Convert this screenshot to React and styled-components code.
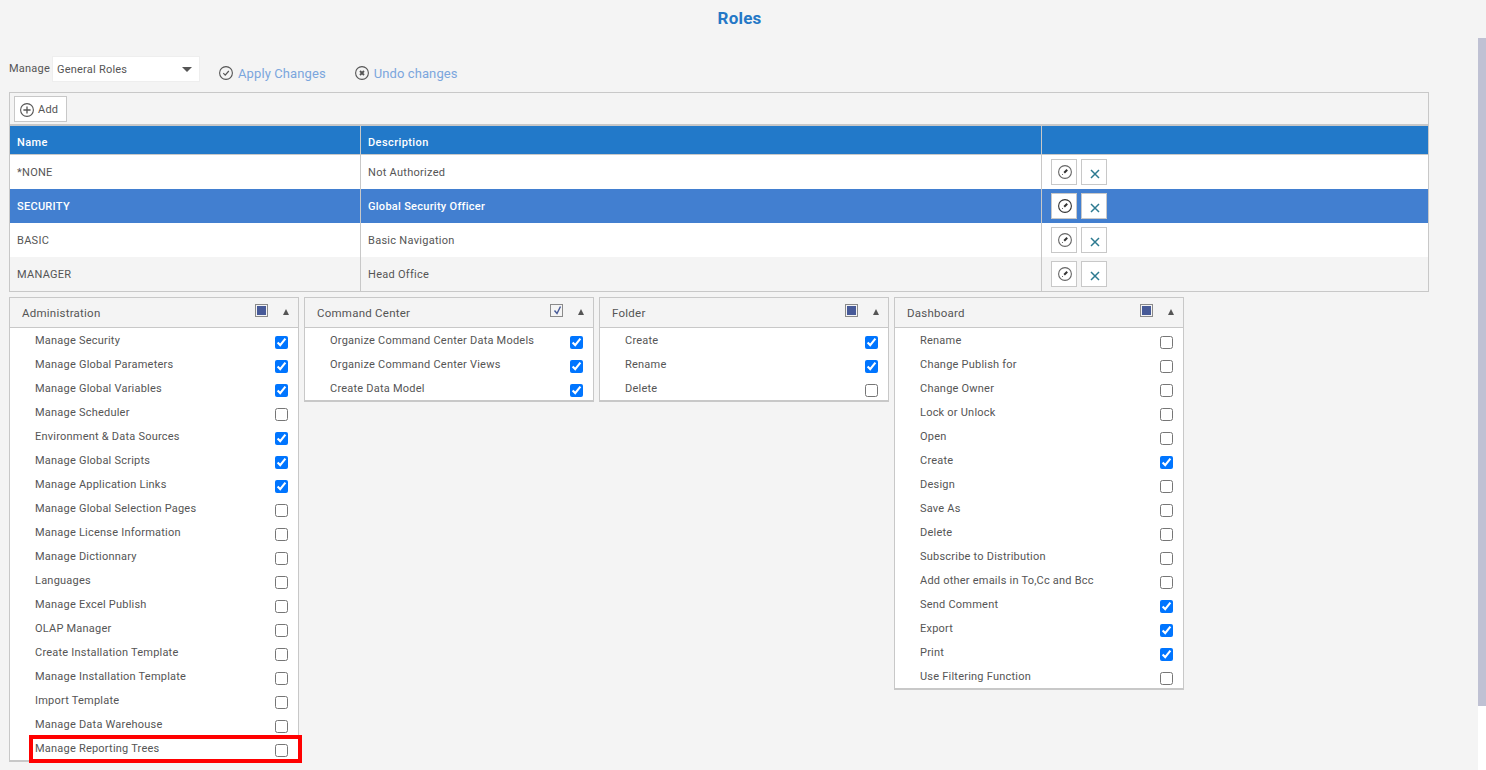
import React from 'react';
import styled, { createGlobalStyle } from 'styled-components';

const Global = createGlobalStyle`
  html, body { margin: 0; padding: 0; height: 770px; overflow: hidden; background: #f4f4f4; }
  #root { height: 770px; }
  * { box-sizing: border-box; }
`;
const Shell = styled.div`
  display: flex; height: 770px; font-family: Roboto, "Liberation Sans", sans-serif; color: #555;
  font-size: 11px; letter-spacing: 0.22px;
`;
const Main = styled.main`flex: 1; min-width: 0; padding: 0 49px 0 9px; overflow: hidden;`;
const Rail = styled.div`
  width: 8px; display: flex; flex-direction: column; background: #fff;
  &::before { content: ""; height: 38px; background: #f4f4f4; }
`;
const Thumb = styled.div`height: 668px; background: #bfc1d3;`;
const Title = styled.h1`
  margin: 0 -41px 0 0; height: 56px; padding-top: 7px; text-align: center; font-size: 17px; line-height: 22px;
  font-weight: 700; color: #2478c6; letter-spacing: 0.2px;
`;
const Bar = styled.div`display: flex; align-items: flex-start; height: 36px;`;
const ManageLabel = styled.span`width: 43px; line-height: 26px; color: #555;`;
const Select = styled.div`
  width: 148px; height: 26px; background: #fff; border: 1px solid #eee; display: flex; align-items: center;
  padding: 0 7px 0 4px; justify-content: space-between;
`;
const Caret = styled.span`
  width: 0; height: 0; border-left: 5px solid transparent; border-right: 5px solid transparent; border-top: 5px solid #555;
`;
const BarAction = styled.a`
  display: flex; align-items: center; gap: 5px; color: #7ba6dd; font-size: 13px; height: 34px; letter-spacing: 0.1px;
  margin-left: ${p => p.$ml}px;
  svg { flex: none; }
`;
const Grid = styled.section`border: 1px solid #c8c8c8; width: 1420px;`;
const GridTools = styled.div`height: 33px; padding-top: 3px; padding-left: 4px; border-bottom: 2px solid #c8c8c8;`;
const AddButton = styled.button`
  width: 53px; height: 26px; display: flex; align-items: center; gap: 4px; padding: 1px 0 0 5px; background: #fff;
  border: 1px solid #c8c8c8; font: inherit; letter-spacing: inherit; color: #555; font-size: 11px;
`;
const Row = styled.div`
  display: grid; grid-template-columns: 350px 681px 1fr; height: ${p => p.$h}px; align-items: stretch;
  background: ${p => p.$bg}; color: ${p => p.$fg || '#555'}; font-weight: ${p => p.$bold ? 500 : 400};
  letter-spacing: ${p => p.$head ? 0.42 : 0.28}px;
  ${p => p.$head ? 'border-bottom: 1px solid #c8c8c8;' : ''}
`;
const Cell = styled.div`
  display: flex; align-items: center; gap: 4px; padding-left: 7px; padding-top: ${p => p.$top || 0}px;
  & + & { border-left: 1px solid #c8c8c8; }
`;
const ActionCell = styled(Cell)`padding-left: 9px;`;
const IconBtn = styled.button`
  width: 26px; height: 26px; padding: 0; background: #fff; border: 1px solid #c8c8c8; display: flex;
  align-items: center; justify-content: center;
`;
const EditBtn = styled(IconBtn)`padding-left: 2px;`;
const Panels = styled.div`display: flex; gap: 5px; margin-top: 5px; align-items: flex-start;`;
const Panel = styled.section`
  width: 290px; background: #fff; border: 1px solid #c8c8c8; border-bottom-width: 2px;
`;
const PanelHead = styled.header`
  height: 30px; background: #f4f4f4; border-bottom: 1px solid #c8c8c8; display: flex; align-items: center;
  padding-left: 12px; padding-right: 9px; font-size: 11.5px; letter-spacing: 0.24px;
`;
const PanelTitle = styled.span`flex: 1; margin-top: 1px;`;
const TriState = styled.span`
  width: 13px; height: 13px; border: 1px solid #8a8a8a; background: #f4f4f4; display: flex; align-items: center;
  justify-content: center; margin-top: -4px; margin-right: 15px; position: relative;
  &::before { content: ""; width: 9px; height: 9px; background: ${p => p.$check ? 'transparent' : '#475a98'}; }
`;
const Tick = styled.svg`position: absolute; left: 1px; top: 0;`;
const Triangle = styled.span`
  width: 0; height: 0; border-left: 3.5px solid transparent; border-right: 3.5px solid transparent;
  border-bottom: 6px solid #555; margin-top: -1px;
`;
const List = styled.ul`list-style: none; margin: 0; padding: 0;`;
const Item = styled.li`
  position: relative; height: 24px; display: flex; justify-content: space-between; align-items: flex-start;
  padding: 6px 10px 0 25px; line-height: 14px;
`;
const Check = styled.input`width: 13px; height: 13px; margin: 2px 0 0; flex: none;`;
const Marker = styled.span`
  position: absolute; left: 19px; right: -4px; top: -1px; height: 28px; border: 4px solid #f00; pointer-events: none;
`;

const Circle = ({ s = 14, c = '#555', children }) => (
  <svg width={s} height={s} viewBox="0 0 14 14" fill="none" stroke={c}>
    <circle cx="7" cy="7" r="6.4" strokeWidth="1.1" />{children}
  </svg>
);
const Edit = ({ dark }) => (
  <Circle c={dark ? '#333' : '#666'}>
    <path d="M6.2 7.8 9.2 4.8" strokeWidth="2" stroke="#333" />
    <path d="M4.3 9.7 5 9" strokeWidth="1" stroke="#333" />
  </Circle>
);
const Cross = () => (
  <svg width="10" height="10" viewBox="0 0 10 10" style={{ marginTop: 3, marginLeft: 2 }}>
    <path d="M1 1 9 9M9 1 1 9" stroke="#2c7a90" strokeWidth="1.5" />
  </svg>
);

const roles = [
  { n: '*NONE', d: 'Not Authorized', bg: '#fff' },
  { n: 'SECURITY', d: 'Global Security Officer', bg: '#427fd0', sel: true },
  { n: 'BASIC', d: 'Basic Navigation', bg: '#fff' },
  { n: 'MANAGER', d: 'Head Office', bg: '#f4f4f4' },
];
const panels = [
  { t: 'Administration', items: [
    ['Manage Security', 1], ['Manage Global Parameters', 1], ['Manage Global Variables', 1], ['Manage Scheduler', 0],
    ['Environment & Data Sources', 1], ['Manage Global Scripts', 1], ['Manage Application Links', 1],
    ['Manage Global Selection Pages', 0], ['Manage License Information', 0], ['Manage Dictionnary', 0], ['Languages', 0],
    ['Manage Excel Publish', 0], ['OLAP Manager', 0], ['Create Installation Template', 0], ['Manage Installation Template', 0],
    ['Import Template', 0], ['Manage Data Warehouse', 0], ['Manage Reporting Trees', 0, true],
  ] },
  { t: 'Command Center', check: true, items: [
    ['Organize Command Center Data Models', 1], ['Organize Command Center Views', 1], ['Create Data Model', 1],
  ] },
  { t: 'Folder', items: [['Create', 1], ['Rename', 1], ['Delete', 0]] },
  { t: 'Dashboard', items: [
    ['Rename', 0], ['Change Publish for', 0], ['Change Owner', 0], ['Lock or Unlock', 0], ['Open', 0], ['Create', 1], ['Design', 0],
    ['Save As', 0], ['Delete', 0], ['Subscribe to Distribution', 0], ['Add other emails in To,Cc and Bcc', 0], ['Send Comment', 1],
    ['Export', 1], ['Print', 1], ['Use Filtering Function', 0],
  ] },
];

export default function App() {
  return (
    <Shell>
      <Global />
      <Main>
        <Title>Roles</Title>
        <Bar>
          <ManageLabel>Manage</ManageLabel>
          <Select>General Roles<Caret /></Select>
          <BarAction $ml={19}>
            <Circle><path d="M4.3 7.2 6.2 9.2 9.8 5" strokeWidth="1.2" /></Circle>Apply Changes
          </BarAction>
          <BarAction $ml={29}>
            <Circle><path d="M5 5 9 9M9 5 5 9" strokeWidth="1.8" /></Circle>Undo changes
          </BarAction>
        </Bar>
        <Grid>
          <GridTools>
            <AddButton>
              <Circle><path d="M7 3.4V10.6M3.4 7H10.6" strokeWidth="1.3" /></Circle>Add
            </AddButton>
          </GridTools>
          <Row $h={29} $bg="#2279c9" $fg="#fff" $bold $head>
            <Cell $top={4}>Name</Cell><Cell $top={4}>Description</Cell><Cell />
          </Row>
          {roles.map(r => (
            <Row key={r.n} $h={34} $bg={r.bg} $fg={r.sel ? '#fff' : undefined} $bold={r.sel}>
              <Cell>{r.n}</Cell><Cell>{r.d}</Cell>
              <ActionCell>
                <EditBtn><Edit dark={r.sel} /></EditBtn>
                <IconBtn><Cross /></IconBtn>
              </ActionCell>
            </Row>
          ))}
        </Grid>
        <Panels>
          {panels.map(p => (
            <Panel key={p.t}>
              <PanelHead>
                <PanelTitle>{p.t}</PanelTitle>
                <TriState $check={p.check}>
                  {p.check && (
                    <Tick width="11" height="11" viewBox="0 0 11 11" fill="none">
                      <path d="M2.5 5.5 5 8.5 8.5 1.5" stroke="#475a98" strokeWidth="1.4" />
                    </Tick>
                  )}
                </TriState>
                <Triangle />
              </PanelHead>
              <List>
                {p.items.map(([label, on, mark]) => (
                  <Item key={label}>
                    {label}
                    <Check type="checkbox" checked={!!on} readOnly />
                    {mark && <Marker />}
                  </Item>
                ))}
              </List>
            </Panel>
          ))}
        </Panels>
      </Main>
      <Rail><Thumb /></Rail>
    </Shell>
  );
}
